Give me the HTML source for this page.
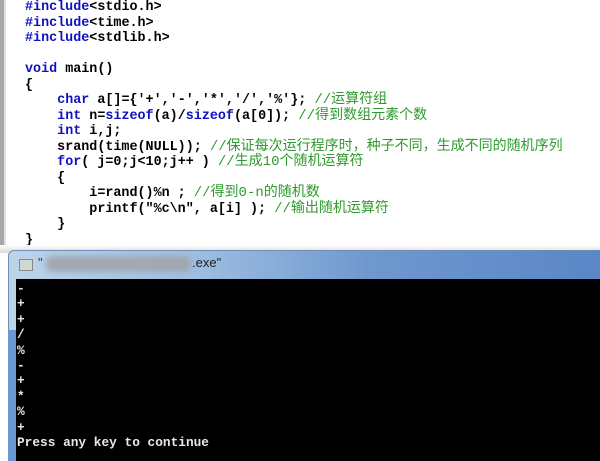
<!DOCTYPE html>
<html><head><meta charset="utf-8"><style>
html,body{margin:0;padding:0;width:600px;height:461px;overflow:hidden;background:#fff;position:relative}
.code{position:absolute;left:25px;top:0;font-family:"Liberation Mono","Noto Sans CJK SC",monospace;font-weight:bold;font-size:13.4px;color:#000;line-height:15.5px}
.code div{height:15.5px;white-space:pre}
.k{color:#1010c0}
.c{color:#2e9a2e;font-weight:normal;font-size:14px}
.con{position:absolute;left:17px;top:281px;font-family:"Liberation Mono",monospace;font-weight:bold;font-size:12.8px;color:#e8e8e8;white-space:pre;line-height:15.4px}
</style></head><body>
<div style="position:absolute;left:0;top:0;width:4px;height:250px;background:#a8a8a8"></div>
<div style="position:absolute;left:4px;top:0;width:2px;height:250px;background:#e0e0e0"></div>
<div class="code">
<div><span class="k">#include</span>&lt;stdio.h&gt;</div>
<div><span class="k">#include</span>&lt;time.h&gt;</div>
<div><span class="k">#include</span>&lt;stdlib.h&gt;</div>
<div> </div>
<div><span class="k">void</span> main()</div>
<div>{</div>
<div>    <span class="k">char</span> a[]={'+','-','*','/','%'}; <span class="c">//运算符组</span></div>
<div>    <span class="k">int</span> n=<span class="k">sizeof</span>(a)/<span class="k">sizeof</span>(a[0]); <span class="c">//得到数组元素个数</span></div>
<div>    <span class="k">int</span> i,j;</div>
<div>    srand(time(NULL)); <span class="c">//保证每次运行程序时，种子不同，生成不同的随机序列</span></div>
<div>    <span class="k">for</span>( j=0;j&lt;10;j++ ) <span class="c">//生成10个随机运算符</span></div>
<div>    {</div>
<div>        i=rand()%n ; <span class="c">//得到0-n的随机数</span></div>
<div>        printf("%c\n", a[i] ); <span class="c">//输出随机运算符</span></div>
<div>    }</div>
<div>}</div>
</div>
<div style="position:absolute;left:0;top:245px;width:600px;height:8px;background:linear-gradient(#fff,#d8d8d8)"></div>
<div style="position:absolute;left:8px;top:250px;width:600px;height:211px;background:linear-gradient(90deg,#bcd4ea 0%,#9fc0e2 30%,#6f98cf 60%,#5a86c6 100%);border-top:1px solid #6e8fb5;border-left:1px solid #6e8fb5;border-radius:6px 0 0 0"></div>
<div style="position:absolute;left:8px;top:330px;width:8px;height:131px;background:#6b98d0"></div>
<div style="position:absolute;left:19px;top:259px;width:12px;height:10px;background:#cfd9cf;border:1px solid #888"></div>
<div style="position:absolute;left:38px;top:255px;font-family:'Liberation Sans',sans-serif;font-size:13px;color:#333">"</div>
<div style="position:absolute;left:46px;top:256px;width:145px;height:16px;background:#a0a8b0;border-radius:6px;filter:blur(3px)"></div>
<div style="position:absolute;left:192px;top:255px;font-family:'Liberation Sans',sans-serif;font-size:13px;color:#222">.exe"</div>
<div style="position:absolute;left:16px;top:279px;width:584px;height:182px;background:#000"></div>
<div class="con">-
+
+
/
%
-
+
*
%
+
Press any key to continue</div>
</body></html>
